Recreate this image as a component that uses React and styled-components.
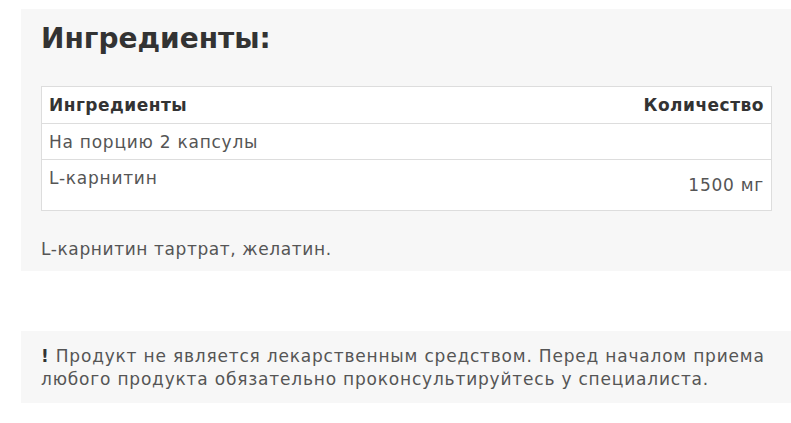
import styled, { createGlobalStyle } from 'styled-components';

const GlobalStyle = createGlobalStyle`
  body {
    margin: 0;
    background: #ffffff;
    font-family: "DejaVu Sans", "Noto Sans", sans-serif;
  }
`;

const Page = styled.div`
  padding: 9px 0 0 21px;
  display: flex;
  flex-direction: column;
  gap: 60px;
`;

const Panel = styled.section`
  background: #f7f7f7;
  padding: ${(p) => p.$pad};
`;

const Title = styled.h2`
  margin: 0 0 30px;
  font-size: 28px;
  line-height: 34px;
  font-weight: 700;
  color: #333333;
`;

const Table = styled.table`
  width: 731px;
  border-collapse: collapse;
  background: #ffffff;
  border: 1px solid #dddddd;
  font-size: 17px;
  line-height: 20px;
  letter-spacing: 0.75px;
  color: #555555;
`;

const HeadCell = styled.th`
  padding: 7px;
  height: 22px;
  font-weight: 700;
  letter-spacing: 0.5px;
  color: #333333;
  text-align: ${(p) => (p.$right ? 'right' : 'left')};
  border-bottom: 1px solid #dddddd;
`;

const Cell = styled.td`
  padding: ${(p) => (p.$top ? '8px 7px' : '7px 7px')};
  height: ${(p) => p.$h || 21}px;
  vertical-align: ${(p) => (p.$top ? 'top' : 'middle')};
  text-align: ${(p) => (p.$right ? 'right' : 'left')};
  border-bottom: 1px solid #dddddd;
`;

const Note = styled.p`
  margin: 27px 0 0;
  font-size: 17px;
  line-height: 22px;
  letter-spacing: 0.6px;
  color: #555555;
`;

const Warning = styled.p`
  margin: 0;
  font-size: 17px;
  line-height: 23px;
  letter-spacing: 0.8px;
  color: #555555;

  b {
    color: #333333;
    font-weight: 800;
  }
`;

export default function App() {
  return (
    <>
      <GlobalStyle />
      <Page>
        <Panel $pad="13px 20px 11px 20px">
          <Title>Ингредиенты:</Title>
          <Table>
            <thead>
              <tr>
                <HeadCell>Ингредиенты</HeadCell>
                <HeadCell $right>Количество</HeadCell>
              </tr>
            </thead>
            <tbody>
              <tr>
                <Cell $h={21}>На порцию 2 капсулы</Cell>
                <Cell $h={21} />
              </tr>
              <tr>
                <Cell $top $h={34}>L-карнитин</Cell>
                <Cell $right>1500 мг</Cell>
              </tr>
            </tbody>
          </Table>
          <Note>L-карнитин тартрат, желатин.</Note>
        </Panel>
        <Panel $pad="14px 20px 12px 20px">
          <Warning>
            <b>!</b> Продукт не является лекарственным средством. Перед началом приема
            <br />
            любого продукта обязательно проконсультируйтесь у специалиста.
          </Warning>
        </Panel>
      </Page>
    </>
  );
}
